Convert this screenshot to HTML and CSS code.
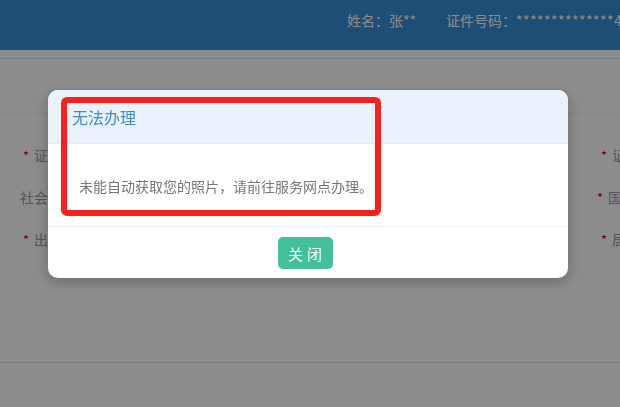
FILE: index.html
```html
<!DOCTYPE html>
<html lang="zh-CN">
<head>
    <meta charset="UTF-8">
    <meta name="viewport" content="width=device-width, initial-scale=1.0">
    <title>无法办理</title>
    <link rel="stylesheet" href="styles.css">
</head>
<body>

<div class="page">
    <div class="header">
        <div class="user-info">
            <span class="info-item">姓名：张**</span>
            <span class="info-item">证件号码：<span class="masked">**************</span>4401</span>
        </div>
    </div>

    <div class="toolbar"></div>

    <div class="form">
        <div class="form-row">
            <div class="label"><span class="req">*</span>证件类型</div>
            <div class="label label-right"><span class="req">*</span>证件有效期</div>
        </div>
        <div class="form-row">
            <div class="label label-plain">社会保障号码</div>
            <div class="label label-right label-wide"><span class="req">*</span>国籍</div>
        </div>
        <div class="form-row">
            <div class="label"><span class="req">*</span>出生日期</div>
            <div class="label label-right"><span class="req">*</span>居住地址</div>
        </div>
    </div>

    <div class="footer-line"></div>
</div>

<div class="mask"></div>

<div class="dialog">
    <div class="dialog-header">
        <h3>无法办理</h3>
    </div>
    <div class="dialog-body">
        <p>未能自动获取您的照片，请前往服务网点办理。</p>
    </div>
    <div class="dialog-footer">
        <button class="btn-close">关闭</button>
    </div>
</div>

<!-- annotation drawn on the screenshot -->
<div class="mark"></div>

</body>
</html>
```

FILE: styles.css
```css
html, body {
    margin: 0;
    padding: 0;
    height: 100%;
    overflow: hidden;
}
body {
    font-family: "Noto Sans CJK SC", "Noto Sans", sans-serif;
    background-color: #fff;
}
.header {
    height: 50px;
    background-color: #388ed5;
    display: flex;
    align-items: center;
    overflow: hidden;
    white-space: nowrap;
}
.user-info {
    margin-left: 347px;
    margin-top: -10px;
    display: flex;
    gap: 30px;
    color: #fff;
    font-size: 14px;
}
.masked {
    letter-spacing: 0.45px;
}
.toolbar {
    margin-top: 8px;
    height: 54px;
    border-top: 1px solid #dcdcdc;
    border-bottom: 1px solid #f0f0f0;
}
.form {
    padding: 20px 0 102px;
    overflow: hidden;
}
.form-row {
    display: flex;
    height: 42px;
    align-items: center;
    white-space: nowrap;
}
.label {
    width: 578px;
    flex-shrink: 0;
    padding-left: 23px;
    font-size: 14px;
    color: #999;
    box-sizing: border-box;
}
.label-plain {
    padding-left: 20px;
}
.label-right {
    padding-left: 23px;
}
.label-wide {
    padding-left: 19px;
}
.req {
    color: #d9001b;
    margin-right: 5px;
    font-size: 13px;
}
.footer-line {
    border-top: 1px solid #e0e0e0;
}
.mask {
    position: fixed;
    inset: 0;
    background-color: rgba(0, 0, 0, 0.45);
}
.dialog {
    position: fixed;
    left: 48px;
    top: 90px;
    width: 520px;
    background-color: #fff;
    border-radius: 10px;
    overflow: hidden;
    box-shadow: 0 4px 14px rgba(0, 0, 0, 0.25);
}
.dialog-header {
    height: 54px;
    background-color: #eaf3fc;
    border-bottom: 1px solid #e3e9f0;
    display: flex;
    align-items: center;
    padding-left: 24px;
    box-sizing: border-box;
}
.dialog-header h3 {
    margin: 0;
    font-size: 16px;
    font-weight: normal;
    color: #4289d3;
}
.dialog-body {
    height: 83px;
    padding: 0 31px;
    display: flex;
    align-items: center;
    box-sizing: border-box;
    border-bottom: 1px solid #eef0f3;
}
.dialog-body p {
    margin: 2px 0 0;
    font-size: 14px;
    color: #777;
}
.dialog-footer {
    display: flex;
    justify-content: center;
    padding: 10px 0 9px 0;
}
.btn-close {
    width: 55px;
    height: 32px;
    margin-left: -6px;
    border: none;
    border-radius: 5px;
    background-color: #43c19a;
    color: #fff;
    font-family: inherit;
    font-size: 15px;
    letter-spacing: 4px;
    padding: 0 0 0 4px;
}
.mark {
    position: fixed;
    left: 61px;
    top: 97px;
    width: 320px;
    height: 119px;
    box-sizing: border-box;
    border: 6px solid #fa2019;
    border-radius: 6px;
}
```
